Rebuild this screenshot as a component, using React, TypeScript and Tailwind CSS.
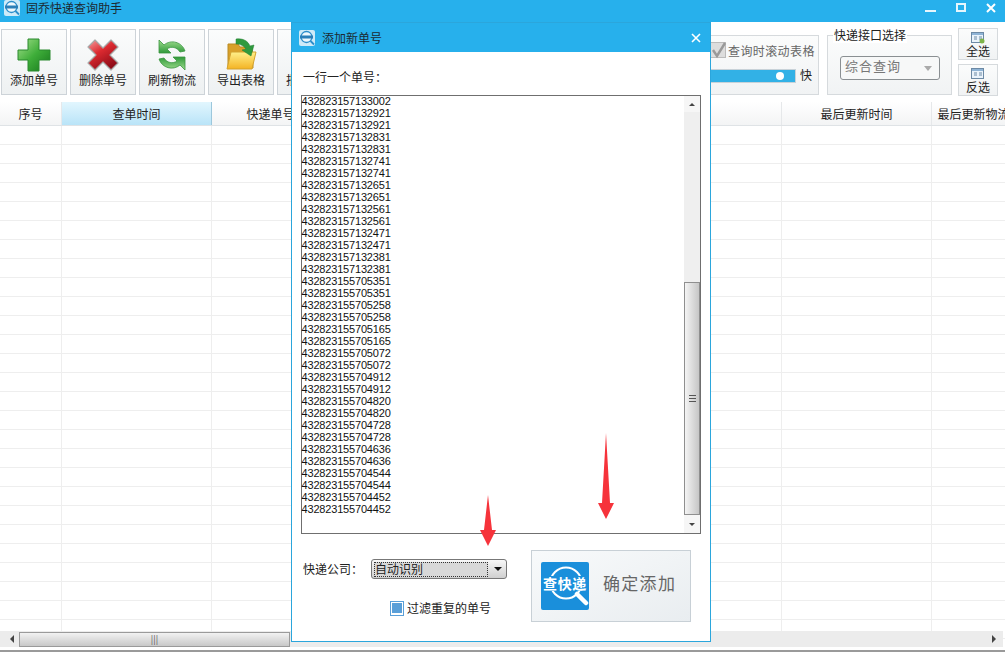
const font = { fontFamily: '"Noto Sans CJK SC", "Liberation Sans", sans-serif' };

const numbers = [
  "432823157133002", "432823157132921", "432823157132921", "432823157132831", "432823157132831",
  "432823157132741", "432823157132741", "432823157132651", "432823157132651", "432823157132561",
  "432823157132561", "432823157132471", "432823157132471", "432823157132381", "432823157132381",
  "432823155705351", "432823155705351", "432823155705258", "432823155705258", "432823155705165",
  "432823155705165", "432823155705072", "432823155705072", "432823155704912", "432823155704912",
  "432823155704820", "432823155704820", "432823155704728", "432823155704728", "432823155704636",
  "432823155704636", "432823155704544", "432823155704544", "432823155704452", "432823155704452",
];

const columns = [
  { label: "序号", width: "w-[62px]" },
  { label: "查单时间", width: "w-[150px]", active: true },
  { label: "快递单号", width: "w-[118px]" },
  { label: "", width: "w-[452px]" },
  { label: "最后更新时间", width: "w-[150px]" },
  { label: "最后更新物流", width: "w-[84px]" },
];

const PlusIcon = () => (
  <svg width="34" height="34" viewBox="0 0 34 34">
    <defs>
      <linearGradient id="plusG" x1="0" y1="0" x2="1" y2="1">
        <stop offset="0" stopColor="#a5e08c" />
        <stop offset="0.5" stopColor="#3fae3a" />
        <stop offset="1" stopColor="#15761b" />
      </linearGradient>
    </defs>
    <path d="M11 1h11v11h11v10H22v11H11V22H1V12h10z" fill="url(#plusG)" stroke="#2a8a2e" strokeWidth="1" />
  </svg>
);

const CrossIcon = () => (
  <svg width="34" height="34" viewBox="0 0 34 34">
    <defs>
      <linearGradient id="crossG" x1="0" y1="0" x2="0.6" y2="1">
        <stop offset="0" stopColor="#f4a0a0" />
        <stop offset="0.45" stopColor="#dc2a30" />
        <stop offset="1" stopColor="#8e0c18" />
      </linearGradient>
    </defs>
    <path d="M9 2l8 8 8-8 7 7-8 8 8 8-7 7-8-8-8 8-7-7 8-8-8-8z" fill="url(#crossG)" stroke="#a8a8a8" strokeWidth="1.2" strokeLinejoin="round" />
  </svg>
);

const RefreshIcon = () => (
  <svg width="32" height="34" viewBox="0 0 32 34">
    <defs>
      <linearGradient id="refreshG" x1="0" y1="0" x2="0" y2="1">
        <stop offset="0" stopColor="#9fdc8e" />
        <stop offset="1" stopColor="#2f9a3a" />
      </linearGradient>
    </defs>
    <path d="M3 2L3 15L15 15L11 11C15 8 21 9 24 14L29 13C26 4 15 1 8 7Z" fill="url(#refreshG)" stroke="#3a9640" strokeWidth="0.8" />
    <path d="M3 2L3 15L15 15L11 11C15 8 21 9 24 14L29 13C26 4 15 1 8 7Z" fill="url(#refreshG)" stroke="#3a9640" strokeWidth="0.8" transform="rotate(180 16 17)" />
  </svg>
);

const FolderIcon = () => (
  <svg width="32" height="34" viewBox="0 0 32 34">
    <defs>
      <linearGradient id="folderG" x1="0" y1="0" x2="0" y2="1">
        <stop offset="0" stopColor="#fff08a" />
        <stop offset="1" stopColor="#f4b324" />
      </linearGradient>
    </defs>
    <path d="M3 6h10l2 3h12l1 21H3z" fill="#d9a02a" stroke="#b98a22" />
    <path d="M6 14h25l-4 17H2z" fill="url(#folderG)" stroke="#d3a22e" />
    <path d="M11 1c7-1 12 2 14 7l4-1-3 11-9-6 4-1c-2-3-5-5-10-5z" fill="#2f9a3e" stroke="#237f31" strokeWidth="0.5" />
  </svg>
);

const SmallListIcon = ({ plus }: { plus?: boolean }) => (
  <svg width="14" height="12" viewBox="0 0 14 12">
    <rect x="0.5" y="0.5" width="12" height="10" fill="#eaf3fb" stroke="#6d8aa5" />
    <rect x="1" y="1" width="11" height="2" fill="#8fb4d6" />
    <path d="M3 5h3M3 7h3M8 5h3M8 7h3" stroke="#6d8aa5" />
    {plus && <circle cx="11" cy="9" r="2.5" fill="#7db44a" />}
  </svg>
);

// small app icon used in the two title bars
const TileLogo = () => (
  <svg width="16" height="16" viewBox="0 0 16 16">
    <rect width="16" height="16" rx="2" fill="#cdeaf8" />
    <circle cx="7.5" cy="7" r="5.5" fill="#eef8fd" stroke="#2b8ecb" strokeWidth="1.3" />
    <rect x="1" y="5.5" width="13" height="3" fill="#2b7fb8" />
    <path d="M11.5 11l3.5 3.5" stroke="#2b8ecb" strokeWidth="1.8" />
  </svg>
);

const BigLogo = () => (
  <div className="relative w-[48px] h-[48px]">
    <svg width="48" height="48" viewBox="0 0 48 48">
      <rect width="48" height="48" rx="2" fill="#1a8fdb" />
      <circle cx="25" cy="21" r="15.5" fill="none" stroke="#fff" strokeWidth="2" />
      <path d="M36 32l9 9" stroke="#fff" strokeWidth="4.5" strokeLinecap="round" />
      <rect x="2" y="14" width="44" height="15" fill="#1a8fdb" />
    </svg>
    <span className="absolute inset-x-0 top-[13px] text-center text-[14px] leading-[16px] font-bold text-white whitespace-nowrap tracking-[0.6px]">查快递</span>
  </div>
);

const ToolButton = ({ icon, label }: { icon: React.ReactNode; label: string }) => (
  <div className="flex flex-col items-center w-[66px] h-[66px] shrink-0 border border-[#cdd3d8] bg-gradient-to-b from-[#fbfcfc] to-[#eef1f2] pt-[8px]">
    <div className="h-[34px] flex items-center justify-center">{icon}</div>
    <span className="text-[12px] leading-[16px] text-[#222]">{label}</span>
  </div>
);

const RedArrow = ({ x, top, height }: { x: number; top: number; height: number }) => (
  <svg className="absolute" style={{ left: x - 9, top }} width="18" height={height} viewBox={`0 0 18 ${height}`}>
    <path d={`M9 0L13 ${height - 16}L17 ${height - 16}L9 ${height}L1 ${height - 16}L5 ${height - 16}Z`} fill="#f6333b" />
  </svg>
);

const Dialog = () => (
  <div className="absolute left-[291px] top-[22px] w-[420px] h-[620px] flex flex-col bg-white border border-[#2ba6dc]">
    <div className="h-[29px] shrink-0 flex items-center bg-[#27b0ec] pl-[7px] pr-[9px]">
      <TileLogo />
      <span className="ml-[7px] text-[12px] text-[#1c2a33]">添加新单号</span>
      <svg className="ml-auto" width="10" height="10" viewBox="0 0 10 10">
        <path d="M1 1l8 8M9 1l-8 8" stroke="#fff" strokeWidth="1.6" />
      </svg>
    </div>
    <div className="flex-1 flex flex-col px-[9px]">
      <div className="mt-[17px] h-[16px] text-[12px] leading-[16px] pl-[2px] text-[#222]">一行一个单号：</div>
      <div className="mt-[10px] h-[439px] flex border border-[#6f6f6f]">
        <div
          className="flex-1 -mt-[1px] -ml-[0.5px] text-[11px] leading-[12px] text-[#111] tracking-[-0.18px]"
          style={{ fontFamily: '"Liberation Sans", sans-serif' }}
        >
          {numbers.map((n, i) => (
            <div key={i}>{n}</div>
          ))}
        </div>
        <div className="w-[16px] flex flex-col bg-[#efefef]">
          <div className="h-[16px] flex items-center justify-center bg-[#f6f6f6]">
            <div className="w-0 h-0 border-x-[3px] border-x-transparent border-b-[3px] border-b-[#444]" />
          </div>
          <div className="h-[170px]" />
          <div className="flex-1 flex items-center justify-center border border-[#8f8f8f] bg-gradient-to-r from-[#f4f4f4] to-[#c6c6c6]">
            <div className="w-[7px] h-[7px] border-y border-[#555] flex items-center">
              <div className="w-full h-[1px] bg-[#555]" />
            </div>
          </div>
          <div className="h-[18px] flex items-center justify-center bg-[#f6f6f6]">
            <div className="w-0 h-0 border-x-[3px] border-x-transparent border-t-[3px] border-t-[#444]" />
          </div>
        </div>
      </div>
      <div className="flex mt-[16px]">
        <div className="w-[230px] flex flex-col">
          <div className="mt-[9px] flex items-center">
            <span className="ml-[2px] w-[68px] text-[12px] leading-[20px] text-[#222]">快递公司：</span>
            <div className="w-[136px] h-[20px] flex items-center border border-[#777] rounded-[3px] bg-gradient-to-b from-[#f8f8f8] to-[#cfcfcf] pl-[2px]">
              <div className="w-[114px] h-[15px] flex items-center border border-dotted border-[#333] bg-[#d8d8d8] text-[12px] leading-[14px] text-[#222]">
                自动识别
              </div>
              <div className="ml-[6px] w-0 h-0 border-x-[4px] border-x-transparent border-t-[4px] border-t-[#111]" />
            </div>
          </div>
          <div className="mt-[20px] ml-[89px] flex items-center">
            <div className="w-[14px] h-[15px] flex items-center justify-center border border-[#5a9fd8] bg-white">
              <div className="w-[10px] h-[10px] bg-[#5a9fd8]" />
            </div>
            <span className="ml-[3px] text-[12px] text-[#222]">过滤重复的单号</span>
          </div>
        </div>
        <div className="w-[160px] h-[72px] flex items-center border border-[#c8d0d6] bg-gradient-to-br from-[#f8fafb] to-[#e9edf0] pl-[9px]">
          <BigLogo />
          <span className="ml-[14px] -mt-[6px] text-[17px] tracking-[1.3px] text-[#666]">确定添加</span>
        </div>
      </div>
    </div>
  </div>
);

export default function App() {
  return (
    <div className="relative w-[1005px] h-[652px] overflow-hidden bg-white flex flex-col" style={font}>
      <div className="h-[22px] shrink-0 flex items-start bg-[#27b0ec] pl-[4px] pr-[9px]">
        <TileLogo />
        <span className="ml-[6px] text-[12px] leading-[15px] text-[#1c2a33]">固乔快递查询助手</span>
        <div className="ml-auto flex items-start gap-[20px] pt-[3px]">
          <div className="w-[11px] h-[2px] mt-[7px] bg-[#e6f6fd]" />
          <div className="w-[10px] h-[9px] border-2 border-[#e6f6fd]" />
          <svg width="10" height="10" viewBox="0 0 10 10">
            <path d="M1 1l8 8M9 1l-8 8" stroke="#fff" strokeWidth="2" />
          </svg>
        </div>
      </div>

      <div className="h-[80px] shrink-0 flex items-start pl-[1px] pr-[7px] bg-white">
        <div className="flex gap-[3px] mt-[7px]">
          <ToolButton icon={<PlusIcon />} label="添加单号" />
          <ToolButton icon={<CrossIcon />} label="删除单号" />
          <ToolButton icon={<RefreshIcon />} label="刷新物流" />
          <ToolButton icon={<FolderIcon />} label="导出表格" />
          <ToolButton icon={null} label="批量导入" />
        </div>
        <div className="ml-auto flex mt-[6px]">
          <div className="relative w-[125px] h-[60px] mt-[7px] border border-[#d6dadd] bg-gradient-to-b from-[#fbfcfc] to-[#f1f3f4] mr-[8px]">
            <div className="absolute left-[15px] top-[6px] flex items-center">
              <svg width="17" height="17" viewBox="0 0 17 17">
                <rect x="0.5" y="0.5" width="15" height="15" fill="#ddd" stroke="#bbb" />
                <path d="M3 8l4 6 8-13" fill="none" stroke="#999" strokeWidth="2.4" />
              </svg>
              <span className="ml-[1px] text-[12px] leading-[16px] tracking-[0.4px] text-[#666]">查询时滚动表格</span>
            </div>
            <div className="absolute left-[6px] top-[33px] w-[95px] h-[14px] border border-[#c8d2d8] bg-[#32b1e6]">
              <div className="absolute right-[11px] top-[2px] w-[8px] h-[8px] rounded-full bg-white" />
            </div>
            <span className="absolute right-[6px] top-[31px] text-[12px] leading-[16px] text-[#222]">快</span>
          </div>
          <div className="w-[125px] mr-[6px] relative h-[60px] mt-[7px] border border-[#d6dadd] bg-gradient-to-b from-[#fbfcfc] to-[#f1f3f4]">
            <span className="absolute left-[5px] -top-[9px] bg-white px-[1px] text-[12px] leading-[16px] text-[#222]">快递接口选择</span>
            <div className="absolute left-[12px] top-[20px] w-[100px] h-[24px] flex items-center border border-[#8a8f92] rounded-[3px] bg-[#f7f8f8] pl-[4px]">
              <span className="-mt-[5px] text-[13px] tracking-[1px] text-[#777]">综合查询</span>
              <div className="ml-auto mr-[7px] w-0 h-0 border-x-[4px] border-x-transparent border-t-[5px] border-t-[#aaa]" />
            </div>
          </div>
          <div className="flex flex-col gap-[4px]">
            <div className="w-[40px] h-[32px] flex flex-col items-center border border-[#d6dadd] bg-gradient-to-b from-[#fbfcfc] to-[#f1f3f4] pt-[3px]">
              <SmallListIcon plus />
              <span className="text-[12px] leading-[13px] text-[#222]">全选</span>
            </div>
            <div className="w-[40px] h-[32px] flex flex-col items-center border border-[#d6dadd] bg-gradient-to-b from-[#fbfcfc] to-[#f1f3f4] pt-[3px]">
              <SmallListIcon />
              <span className="text-[12px] leading-[13px] text-[#222]">反选</span>
            </div>
          </div>
        </div>
      </div>

      <div className="h-[24px] shrink-0 flex border-b border-[#dfe3e6] bg-gradient-to-b from-white to-[#f3f4f5]">
        {columns.map((c, i) => (
          <div
            key={i}
            className={`${c.width} shrink-0 flex items-center justify-center whitespace-nowrap text-[12px] text-[#222] border-r ${
              c.active
                ? "border-[#9cc7dc] bg-gradient-to-b from-[#e2f6fe] to-[#b9e4f8]"
                : "border-[#e6e8ea]"
            }`}
          >
            {c.label}
          </div>
        ))}
      </div>

      <div className="flex-1 overflow-hidden">
        {Array.from({ length: 27 }).map((_, r) => (
          <div key={r} className="h-[19px] flex border-b border-[#eeeeee]">
            {columns.map((c, i) => (
              <div key={i} className={`${c.width} shrink-0 border-r border-[#eeeeee]`} />
            ))}
          </div>
        ))}
      </div>

      <div className="absolute left-0 right-[2px] top-[631px] h-[16px] flex items-center pl-[5px] pr-[7px] bg-[#ececec]">
        <div className="w-[14px] flex justify-center">
          <div className="w-0 h-0 border-y-[4px] border-y-transparent border-r-[4px] border-r-[#444]" />
        </div>
        <div className="w-[271px] h-[15px] flex items-center justify-center border border-[#9a9a9a] bg-gradient-to-b from-[#f2f2f2] to-[#c8c8c8] text-[9px] leading-none text-[#555]">
          |||
        </div>
        <div className="ml-auto w-0 h-0 border-y-[4px] border-y-transparent border-l-[4px] border-l-[#444]" />
      </div>
      <div className="absolute left-0 right-0 top-[650px] h-[2px] bg-[#9a9a9a]" />

      <Dialog />
      <RedArrow x={488} top={495} height={51} />
      <RedArrow x={606} top={433} height={86} />
    </div>
  );
}
